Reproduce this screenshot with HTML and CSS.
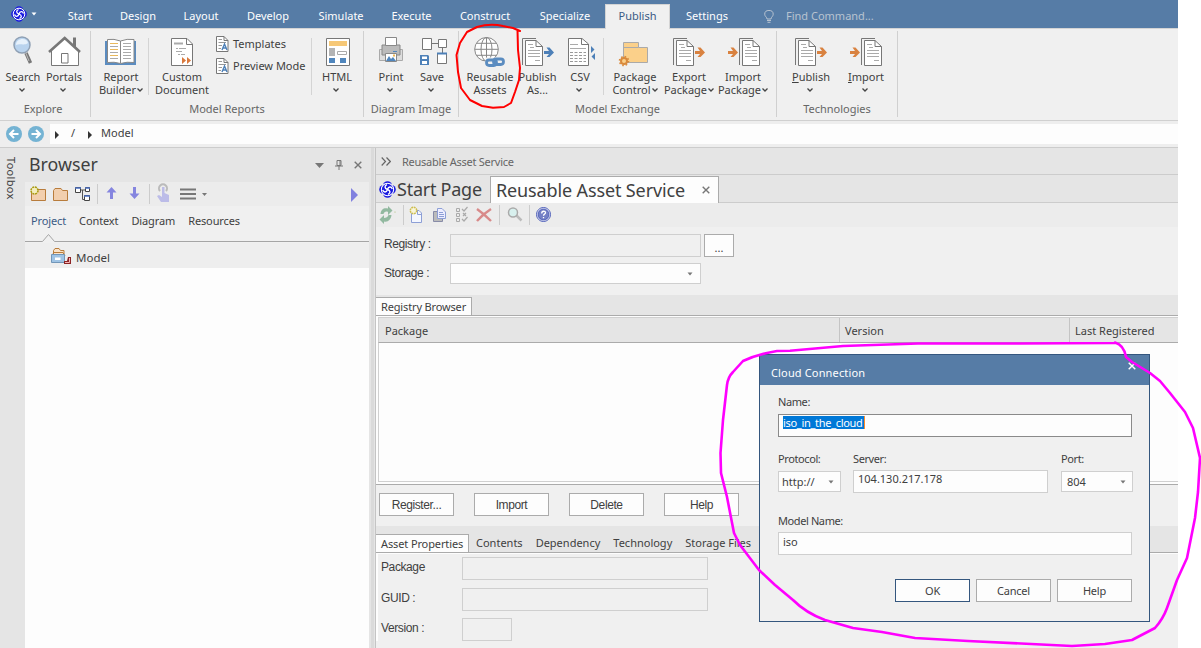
FILE: index.html
```html
<!DOCTYPE html>
<html lang="en">
<head>
<meta charset="utf-8">
<title>Reusable Asset Service</title>
<link rel="stylesheet" href="styles.css">
</head>
<body>
<svg class="defs" width="0" height="0">
  <symbol id="pages" viewBox="0 0 22 29" overflow="visible">
    <path d="M.5 27V.5H14" fill="none" stroke="#777"/>
    <path d="M3.500 2.500H14L20.500 8.500V27.500H3.500Z" fill="#fff" stroke="#777"/>
    <path d="M14 2.500V8.500H20.500" fill="none" stroke="#777"/>
    <path d="M6 6.500H11M8 9.500H12M6 12.500H18M6 15.500H18M6 18.500H18M13 22.500H18" stroke="#aaa"/>
  </symbol>
  <symbol id="arrow" viewBox="0 0 10 10" overflow="visible"><path d="M0 3.500H5L2.500 0H5.500L10 5L5.500 9.500H2.500L5 6.500H0Z" fill="currentColor"/></symbol>
  <symbol id="chev" viewBox="0 0 6 4" overflow="visible"><path d="M.5 .5L3 3L5.500 .5" fill="none" stroke="#444" stroke-width="1.3"/></symbol>
  <symbol id="tri" viewBox="0 0 6 4"><path d="M.5 .5H5.500L3 3.500Z" fill="currentColor"/></symbol>
  <symbol id="logo" viewBox="0 0 16 16">
    <g fill="#1a1ae0"><circle cx="8" cy="4.500" r="4.300"/><circle cx="11.500" cy="8" r="4.300"/><circle cx="8" cy="11.500" r="4.300"/><circle cx="4.500" cy="8" r="4.300"/></g>
    <circle cx="8" cy="8" r="5.800" fill="none" stroke="#fff"/>
    <g fill="none" stroke="#fff" stroke-width="1.300"><path d="M8 8C5 7 5 4.500 7.500 3.500M8 8C9 5 11.500 5 12.500 7.500M8 8C11 9 11 11.500 8.500 12.500M8 8C7 11 4.500 11 3.500 8.500"/></g>
  </symbol>
  <symbol id="tpl" viewBox="0 0 13 16">
    <path d="M.5 .5H8L12 4.500V15.500H.5Z" fill="#fff" stroke="#777"/><path d="M8 .5V4.500H12" fill="none" stroke="#777"/>
    <path d="M2.500 3.500H6M2.500 6.500H10M2.500 9.500H6M2.500 12.500H5" stroke="#999"/>
    <path d="M6 14L8.500 8L11 14M7 12H10" fill="none" stroke="#4d80b8" stroke-width="1.400"/>
  </symbol>
  <symbol id="x" viewBox="0 0 8 8"><path d="M.7 .7L7.300 7.300M7.300 .7L.7 7.300" stroke="currentColor" stroke-width="1.400"/></symbol>
</svg>

<div class="app">
  <nav class="menu">
    <div class="brand"><svg width="16" height="16"><use href="#logo"/></svg><svg class="white" width="6" height="4"><use href="#tri"/></svg></div>
    <span class="m w56">Start</span><span class="m w60">Design</span><span class="m w66">Layout</span><span class="m w68">Develop</span><span class="m w78">Simulate</span><span class="m w63">Execute</span><span class="m w84">Construct</span><span class="m w76">Specialize</span>
    <span class="m active">Publish</span><span class="m w74">Settings</span>
    <svg class="bulb" width="10" height="13" viewBox="0 0 10 13"><path d="M3 9C3 7 .7 6.500 .7 4.200A4.200 3.700 0 0 1 9.200 4.200C9.200 6.500 7 7 7 9ZM3 10.500H7M3.500 12.300H6.500" fill="none" stroke="#b8c3d0"/></svg>
    <span class="find">Find Command...</span>
  </nav>

  <section class="ribbon">
    <div class="group g1">
      <div class="row">
        <div class="btn w42"><svg class="ico" viewBox="0 0 32 32"><path d="M19 18L23.500 28" stroke="#777" stroke-width="3.500"/><path d="M18 16L22 26" stroke="#bbb"/><circle cx="15" cy="10" r="8" fill="#b9d3ee" stroke="#8fa0b4" stroke-width="1.500"/><path d="M9 10C9 3 20 2 21 8C17 11 13 8 9 10Z" fill="#e7f1fb"/></svg><span>Search</span><svg class="chev"><use href="#chev"/></svg></div>
        <div class="btn w40"><svg class="ico" viewBox="0 0 32 32"><path d="M26.500 14V2.500" stroke="#777" stroke-width="3"/><path d="M3.500 15V30.500H30.500V15L17 3Z" fill="#fff" stroke="#777"/><path d="M1 17L16.700 3L32 17" fill="none" stroke="#777" stroke-width="2.600"/><path d="M13.500 18.500H20V28H13.500Z" fill="#fff" stroke="#777"/></svg><span>Portals</span><svg class="chev"><use href="#chev"/></svg></div>
      </div>
      <div class="cap">Explore</div>
    </div>
    <div class="group g2">
      <div class="row">
        <div class="btn w54"><svg class="ico" viewBox="0 0 32 32"><path d="M0 6H31V30H0Z" fill="#5b8cc0"/><path d="M2.500 4.500Q9 3.500 15.500 6Q22 3.500 29 4.500V27.500Q22 26.500 15.500 28.500Q9 26.500 2.500 27.500Z" fill="#fff" stroke="#888"/><path d="M15.500 6V28" stroke="#888"/><path d="M5 8.500H13M5 14.500H13M5 20.500H13" stroke="#e9b95c"/><path d="M5 11.500H13M5 17.500H13M5 23.500H13M18 8.500H26M18 11.500H26M18 14.500H26M18 17.500H26M18 20.500H26M18 23.500H26" stroke="#aaa"/></svg><span>Report<br>Builder<svg class="ic"><use href="#chev"/></svg></span></div>
        <i class="sep"></i>
        <div class="btn w64 cd"><svg class="ico" viewBox="0 0 32 32"><path d="M5.500 3.500H21L26.500 9V30.500H5.500Z" fill="#fff" stroke="#777"/><path d="M20.500 3.500V9.500H26.500" fill="none" stroke="#777"/><path d="M8 8.500H17" stroke="#aaa" stroke-width="2"/><path d="M10 13.500H12M13 13.500H20M10 16.500H16M12 19.500H14M15 19.500H19" stroke="#aaa"/><path d="M16 22L20 25.500L16 29ZM21 22L25 25.500L21 29Z" fill="#d9793c"/></svg><span>Custom<br>Document</span></div>
        <div class="list"><div><svg width="13" height="16"><use href="#tpl"/></svg>Templates</div><div><svg width="13" height="16"><use href="#tpl"/></svg>Preview Mode</div></div>
        <i class="sep"></i>
        <div class="btn w50"><svg class="ico" viewBox="0 0 32 32"><path d="M5.500 3.500H28.500V30.500H5.500Z" fill="#fff" stroke="#777"/><path d="M8 6H26V11H8Z" fill="#f6c877"/><path d="M8 13H14V21H8Z" fill="#b4b4b4"/><path d="M16.500 16.500H25.500V19.500H16.500Z" fill="none" stroke="#aaa"/><path d="M8 23H14V28H8ZM19 23H25V28H19Z" fill="#5086bd"/></svg><span>HTML</span><svg class="chev"><use href="#chev"/></svg></div>
      </div>
      <div class="cap">Model Reports</div>
    </div>
    <div class="group g3">
      <div class="row">
        <div class="btn w42"><svg class="ico" viewBox="0 0 32 32"><path d="M4.500 14.500H27.500V25.500H4.500Z" fill="#ddd" stroke="#aaa"/><path d="M7 10H25V20H7Z" fill="#bbb" stroke="#888"/><path d="M10.500 2.500H21.500V10.500H10.500Z" fill="#fff" stroke="#888"/><path d="M10.500 18.500H21.500V26.500H10.500Z" fill="#fff" stroke="#888"/><path d="M11 26L14 21L16 24L18 22L21 26Z" fill="#5086bd"/><path d="M18 20.500H20" stroke="#f0b850" stroke-width="2"/><path d="M18 16.500H22" stroke="#5086bd"/></svg><span>Print</span><svg class="chev"><use href="#chev"/></svg></div>
        <div class="btn w40"><svg class="ico" viewBox="0 0 32 32"><path d="M15 8.500H22M26.500 13V18" stroke="#777"/><path d="M6.500 3.500H15.500V14.500H6.500ZM22.500 4.500H30.500V12.500H22.500ZM21.500 18.500H30.500V28.500H21.500Z" fill="#fff" stroke="#777"/><path d="M21 18.500H31" stroke="#4d80b8" stroke-width="2"/><path d="M4 20H12L13 21V30H4Z" fill="#4d80b8"/><path d="M6 21.500H11V24H6ZM6 26H11V29H6Z" fill="#fff"/></svg><span>Save</span><svg class="chev"><use href="#chev"/></svg></div>
      </div>
      <div class="cap">Diagram Image</div>
    </div>
    <div class="group g4">
      <div class="row">
        <div class="btn w56"><svg class="ico" viewBox="0 0 32 32"><g stroke="#888" fill="none"><circle cx="12.500" cy="14.300" r="11.800" fill="#fff"/><ellipse cx="12.500" cy="14.300" rx="5.500" ry="11.800"/><path d="M12.500 2.500V26M.7 14.300H24.300M2.500 8.300H22.500M2.500 20.300H22.500"/></g><path d="M11.500 22.500H31V32H11.500Z" fill="#f0f0f0"/><g fill="none" stroke="#5b8cc0" stroke-width="2.800"><rect x="12.500" y="25" width="10" height="5.500" rx="2.700"/><rect x="19.500" y="24" width="10" height="5.500" rx="2.700"/></g></svg><span>Reusable<br>Assets</span></div>
        <div class="btn w39"><svg class="ico blue" viewBox="0 0 32 32"><use href="#pages" x="0" y="3" width="22" height="29"/><use href="#arrow" x="22" y="12.500" width="10" height="10"/></svg><span>Publish<br>As...</span></div>
        <div class="btn w46"><svg class="ico" viewBox="0 0 32 32"><path d="M4.500 3.500H18L24.500 9V30.500H4.500Z" fill="#fff" stroke="#777"/><path d="M17.500 3.500V9.500H24.500" fill="none" stroke="#777"/><path d="M6 9.500H14M6 13.500H22" stroke="#aaa"/><path d="M6 17.500H22M6 20.500H22M6 23.500H22M6 26.500H22" stroke="#999" stroke-dasharray="3 1.500"/><path d="M27 11L30.500 14.500L27 18ZM31 18V25L27.500 21.500Z" fill="#4d80b8"/></svg><span>CSV</span><svg class="chev"><use href="#chev"/></svg></div>
        <i class="sep"></i>
        <div class="btn w62"><svg class="ico" viewBox="0 0 32 32"><path d="M4.500 27.500V7.500H19.500V12.500H28.500V27.500Z" fill="#fbd08a" stroke="#aaa"/><path d="M4.500 12.500H19.500" stroke="#aaa"/><circle cx="5" cy="26" r="3" fill="#fbd08a" stroke="#d98a3c" stroke-width="2"/><circle cx="5" cy="26" r="4.500" fill="none" stroke="#d98a3c" stroke-width="1.600" stroke-dasharray="1.600 1.930"/></svg><span>Package<br>Control<svg class="ic"><use href="#chev"/></svg></span></div>
        <div class="btn w46"><svg class="ico orange" viewBox="0 0 32 32"><use href="#pages" x="0" y="3" width="22" height="29"/><use href="#arrow" x="22" y="12.500" width="10" height="10"/></svg><span>Export<br>Package<svg class="ic"><use href="#chev"/></svg></span></div>
        <div class="btn w62"><svg class="ico orange" viewBox="0 0 32 32"><use href="#pages" x="12" y="3" width="22" height="29"/><use href="#arrow" x="1" y="12.500" width="10" height="10"/></svg><span>Import<br>Package<svg class="ic"><use href="#chev"/></svg></span></div>
      </div>
      <div class="cap">Model Exchange</div>
    </div>
    <div class="group g5">
      <div class="row">
        <div class="btn w60"><svg class="ico orange" viewBox="0 0 32 32"><use href="#pages" x="0" y="3" width="22" height="29"/><use href="#arrow" x="22" y="12.500" width="10" height="10"/></svg><span><u>P</u>ublish</span><svg class="chev"><use href="#chev"/></svg></div>
        <div class="btn w50"><svg class="ico orange" viewBox="0 0 32 32"><use href="#pages" x="11" y="3" width="22" height="29"/><use href="#arrow" x="0" y="12.500" width="10" height="10"/></svg><span><u>I</u>mport</span><svg class="chev"><use href="#chev"/></svg></div>
      </div>
      <div class="cap">Technologies</div>
    </div>
  </section>

  <div class="address">
    <svg width="16" height="16" viewBox="0 0 16 16"><circle cx="8" cy="8" r="8" fill="#74b3d3"/><path d="M12.500 8H4.500M8 4L4 8L8 12" fill="none" stroke="#fff" stroke-width="2"/></svg>
    <svg width="16" height="16" viewBox="0 0 16 16"><circle cx="8" cy="8" r="8" fill="#74b3d3"/><path d="M3.500 8H11.500M8 4L12 8L8 12" fill="none" stroke="#fff" stroke-width="2"/></svg>
    <div class="path"><svg width="4" height="8"><path d="M0 0V8L4 4Z" fill="#333"/></svg><span>/</span><svg width="4" height="8"><path d="M0 0V8L4 4Z" fill="#333"/></svg><span>Model</span></div>
  </div>

  <div class="work">
    <div class="toolbox">Toolbox</div>
    <aside class="browser">
      <header><h1>Browser</h1><svg width="9" height="5"><path d="M0 0H9L4.500 5Z" fill="#777"/></svg><svg width="8" height="10"><path d="M2 .5H6V5.500H2ZM0 6H8M4 6V10M5 1V5" fill="none" stroke="#777"/></svg><svg class="gray" width="8" height="8"><use href="#x"/></svg></header>
      <svg class="tools" width="344" height="24" viewBox="0 0 344 24">
        <path d="M6.500 7.500H20.500V18.500H6.500Z" fill="#f2cfae" stroke="#b87c3c"/><circle cx="9.500" cy="8.500" r="3.500" fill="#f4eec0" stroke="#a89a10" stroke-width="1.500" stroke-dasharray="2 .75"/>
        <path d="M28.500 18.500V8.500L30 6.500H36L37.500 8.500H42.500V18.500Z" fill="#f2cfae" stroke="#b87c3c"/>
        <path d="M55 8H60M57.500 8V17.500H60" fill="none" stroke="#555"/><path d="M50.500 5.500H55.500V10.500H50.500ZM60.500 5.500H64.500V9.500H60.500ZM59.500 13.500H64.500V18.500H59.500Z" fill="#fff" stroke="#444"/><path d="M50 6H56M60 6H65M59 14H65" stroke="#4a6ec0" stroke-width="1.500"/>
        <path d="M72.500 2V22M124.500 2V22" stroke="#ccc"/>
        <path d="M86.500 5L91.500 10.500H88V17H85V10.500H81.500Z" fill="#8585df"/><path d="M109.500 17L114.500 11.500H111V5H108V11.500H104.500Z" fill="#8585df"/>
        <path d="M135 9A4 4 0 1 1 141 9" fill="none" stroke="#bbb" stroke-width="2"/><path d="M137 5H139.500V11L144 13V20H136L132 14L134 13L137 15Z" fill="#bcbce8"/>
        <path d="M155 7.500H171M155 12H171M155 16.500H171" stroke="#777" stroke-width="2"/><path d="M177 11H182L179.500 14Z" fill="#777"/>
        <path d="M326 6V20L333 13Z" fill="#8181df"/>
      </svg>
      <div class="btabs"><span class="sel">Project</span><span>Context</span><span>Diagram</span><span>Resources</span></div>
      <svg class="caret" width="344" height="10"><path d="M0 8.500H17.500L23.500 1.500L29.500 8.500H344" fill="none" stroke="#a5a5a5"/></svg>
      <div class="node"><svg width="21" height="17" viewBox="0 0 21 17"><path d="M2.500 7V2.500L4 .5H8L9.500 2.500H13V7M.5 8L3 4.500H12L14 8" fill="#fbe3c8" stroke="#b87c3c"/><path d="M.5 6.500H13.500V14.500H.5Z" fill="#9fc3e4" stroke="#7296b8"/><path d="M4 9.500H9.500V12H4Z" fill="#fff"/><path d="M17 9H20V16H13V13H16Z" fill="#8d2424"/><path d="M18.500 10V14.500H14" stroke="#f6b5b5" fill="none"/></svg>Model</div>
      <div class="tree"></div>
    </aside>
    <div class="splitter"></div>
    <main class="main">
      <div class="crumb"><svg width="10" height="9"><path d="M.7 .5L4.500 4.500L.7 8.500M5.500 .5L9.300 4.500L5.500 8.500" fill="none" stroke="#666" stroke-width="1.200"/></svg>Reusable Asset Service</div>
      <div class="docs"><div class="doc start"><svg width="17" height="17"><use href="#logo"/></svg>Start Page</div><div class="doc on">Reusable Asset Service<svg class="gray" width="8" height="8"><use href="#x"/></svg></div></div>
      <svg class="dtools" width="802" height="24" viewBox="0 0 802 24">
        <path d="M4.500 11C5 6 8 4.500 12 5.500V3L16.500 7.500L12 12V9C10 8 8 9 7.500 11ZM15.500 12C15 16.500 12 19.500 8 18.500V21L3.500 16.500L8 12V15C10 15 12 14 12.500 12Z" fill="#92b9a0"/><circle cx="19" cy="9" r=".6" fill="#a8bb70"/>
        <path d="M27.500 2V22M123.500 2V22M153.500 2V22" stroke="#ccc"/>
        <path d="M35.500 7.500H43L45.500 10V19.500H35.500Z" fill="#f4f7ff" stroke="#8d9fd6"/><path d="M41.500 7.500V11.500H45.500" fill="none" stroke="#8d9fd6"/><circle cx="37.500" cy="7.500" r="3.200" fill="#f8f5d8" stroke="#cdbd50" stroke-width="1.500" stroke-dasharray="1.800 .7"/>
        <path d="M57.500 8.500H66.500V18.500H57.500Z" fill="#bbb" stroke="#888ca8"/><path d="M61.500 5.500H66L69.500 9V15.500H61.500Z" fill="#eef" stroke="#8d9fd6"/><path d="M63 9.500H67M63 11.500H68M63 13.500H68" stroke="#8d9fd6"/>
        <path d="M80.500 5.500H83.500V8.500H80.500ZM80.500 10.500H83.500V13.500H80.500ZM80.500 15.500H83.500V18.500H80.500Z" fill="none" stroke="#aaa"/><path d="M86 6L88 8L91.500 4M87 10L90 13M90 10L87 13M86 16L88 18L91.500 14" fill="none" stroke="#aaa" stroke-width="1.200"/>
        <path d="M101 6Q108 11 115 18M115 6Q107 11 101 18" fill="none" stroke="#d88a8a" stroke-width="2.400"/>
        <path d="M140 12L145.500 17.500" stroke="#bbb" stroke-width="2.500"/><circle cx="137" cy="9.500" r="4.500" fill="#d8f0ee" stroke="#aaa" stroke-width="1.500"/>
        <circle cx="167.500" cy="11.500" r="7" fill="#fff" stroke="#4a5bb8"/><circle cx="167.500" cy="11.500" r="5.500" fill="#7480c5" stroke="#4a5bb8"/><path d="M165.700 10.500C165.700 7.500 169.500 7.700 169.500 9.800C169.500 11 167.500 11.200 167.500 12.800M167.500 14V15.200" fill="none" stroke="#fff" stroke-width="1.300"/>
      </svg>
      <div class="form">
        <label>Registry :</label><div class="field dis"></div><button class="dots">...</button>
        <label class="low">Storage :</label><div class="field combo"><svg width="6" height="4"><use href="#tri"/></svg></div>
      </div>
      <div class="band b1"><span class="on">Registry Browser</span></div>
      <div class="grid"><div class="thead"><span class="c1">Package</span><span class="c2">Version</span><span class="c3">Last Registered</span></div><div class="tbody"></div></div>
      <div class="actions"><button>Register...</button><button>Import</button><button>Delete</button><button>Help</button></div>
      <div class="band b2"><span class="on">Asset Properties</span><span>Contents</span><span>Dependency</span><span>Technology</span><span>Storage Files</span></div>
      <div class="props"><label>Package</label><div class="field"></div><label>GUID :</label><div class="field"></div><label>Version :</label><div class="field short"></div></div>
    </main>
  </div>
</div>

<div class="dialog">
  <header>Cloud Connection<svg width="8" height="8"><use href="#x"/></svg></header>
  <div class="body">
    <label>Name:</label>
    <div class="in focus"><mark>iso_in_the_cloud</mark></div>
    <div class="cols">
      <div class="proto"><label>Protocol:</label><div class="in sel">http://<svg width="6" height="4"><use href="#tri"/></svg></div></div>
      <div class="server"><label>Server:</label><div class="in">104.130.217.178</div></div>
      <div class="port"><label>Port:</label><div class="in sel">804<svg width="6" height="4"><use href="#tri"/></svg></div></div>
    </div>
    <label>Model Name:</label>
    <div class="in last">iso</div>
    <div class="dbtns"><button class="ok">OK</button><button>Cancel</button><button>Help</button></div>
  </div>
</div>

<svg class="ink" width="1201" height="648" viewBox="0 0 1201 648">
  <path d="M520 31L513 28L503 26Q490 23 477 27L467 32L460 43L456.500 55L458 72L461 88L470 100L482 106L493 107.700L504 107L511 103L515 92L519 80L520 68L518 50L517.500 30" stroke="#f00" stroke-width="2"/>
  <path d="M1115 343L1020 343.500H918L843 346L790 350.700L777 351Q758 354 743 361L733 372Q728 377 727 385L723 420L720.500 453L721 473L727 497L734 533L740 545L759 570L775 585L793 600Q806 613 825 620L853 628L882 632L915 638L968 641L1072 646L1105 644L1132 640L1155 628Q1163 619 1167 608L1177 580L1187 558L1195 518L1198 492L1200 458L1193 428L1185 412L1170 393L1160 381L1150 373L1132 362L1126 357Q1124 345 1115 342.500" stroke="#f0f" stroke-width="2.600"/>
</svg>
</body>
</html>
```
FILE: styles.css
```css
* { box-sizing: border-box; }
body { margin: 0; width: 1201px; height: 648px; overflow: hidden; background: #fff; color: #404040; font: 11px/13px "Noto Sans", "Open Sans", sans-serif; position: relative; }
svg { flex: none; display: block; }
button { font: inherit; color: inherit; padding: 0; background: #fdfdfd; border: 1px solid #ababab; }
.defs { position: absolute; }
.app { width: 1178px; height: 648px; display: flex; flex-direction: column; background: #e5e5e5; }

/* menu bar */
.menu { height: 28px; flex: none; display: flex; background: #567ca6; color: #fff; padding-top: 4px; }
.brand { width: 52px; padding: 2px 0 0 11px; display: flex; gap: 4px; }
.brand .white { color: #fff; margin-top: 6px; }
.m { flex: none; text-align: center; line-height: 24px; }
.m.active { width: 65px; height: 25px; margin-left: 2px; background: #f0f0f0; color: #3a5a85; border: 1px solid #d4d4d4; border-bottom: 0; line-height: 22px; position: relative; }
.bulb { margin: 6px 0 0 20px; }
.find { margin-left: 12px; line-height: 24px; color: #b8c3d0; }
.w39 { width: 39px; } .w40 { width: 40px; } .w42 { width: 42px; } .w46 { width: 46px; }
.w50 { width: 50px; } .w54 { width: 54px; } .w56 { width: 56px; } .w60 { width: 60px; } .w62 { width: 62px; }
.w63 { width: 63px; } .w64 { width: 64px; } .w66 { width: 66px; } .w68 { width: 68px; } .w74 { width: 74px; }
.w76 { width: 76px; } .w78 { width: 78px; } .w84 { width: 84px; }

/* ribbon */
.ribbon { height: 93px; flex: none; display: flex; background: #f0f0f0; border-top: 1px solid #d4d4d4; border-bottom: 1px solid #d0d0d0; padding-top: 2px; }
.group { height: 86px; flex: none; border-right: 1px solid #d0d0d0; }
.row { height: 70px; display: flex; padding-top: 4px; }
.cap { text-align: center; line-height: 16px; color: #666; }
.g1 { width: 91px; } .g1 .row { padding-left: 2px; } .g1 .cap { padding-right: 4px; }
.g2 { width: 273px; } .g2 .row { padding-left: 3px; }
.g3 { width: 95px; } .g3 .row { padding-left: 6px; }
.g4 { width: 318px; } .g4 .row { padding-left: 3px; }
.g5 { width: 121px; } .g5 .row { padding-left: 4px; }
.btn { flex: none; display: flex; flex-direction: column; align-items: center; text-align: center; white-space: nowrap; }
.ico { width: 32px; height: 32px; margin-bottom: 3px; overflow: visible; }
.ico.blue { color: #4d80b8; } .ico.orange { color: #d98240; }
.chev { width: 6px; height: 4px; margin: 5px 2px 0 0; }
.ic { display: inline-block; width: 6px; height: 4px; margin-left: 1px; vertical-align: 2px; }
.cd { margin-left: 1px; }
.sep { width: 1px; height: 57px; margin-top: 3px; background: #d4d4d4; }
.list { width: 97px; padding: 1px 0 0 2px; white-space: nowrap; }
.list div { display: flex; gap: 4px; height: 22px; line-height: 16px; }

/* address bar */
.address { height: 27px; flex: none; display: flex; align-items: center; background: #eee; border-bottom: 1px solid #ccc; padding-left: 6px; gap: 6px; }
.path { flex: 1; height: 20px; background: #fdfdfd; display: flex; align-items: center; padding-left: 5px; line-height: 18px; }
.path svg { margin-top: 1px; }
.path span { height: 20px; margin: 0 13px 0 12px; }
.path span:last-child { margin-left: 9px; }

/* left panel */
.work { flex: 1; display: flex; min-height: 0; }
.toolbox { width: 25px; writing-mode: vertical-rl; padding: 9px 5px 0 0; line-height: 18px; letter-spacing: .3px; }
.browser { width: 344px; display: flex; flex-direction: column; }
.browser header { height: 34px; display: flex; align-items: center; gap: 11px; padding-right: 7px; }
h1 { font: 17.800px/32px "Noto Sans", sans-serif; height: 34px; margin: 0 auto 0 4px; }
.gray { color: #777; }
.tools { background: #ececec; }
.btabs { height: 27px; background: #f0f0f0; display: flex; gap: 13px; padding: 0 0 0 6px; line-height: 30px; letter-spacing: -.12px; }
.btabs .sel { color: #3a5a85; }
.caret { background: #f0f0f0; }
.node { height: 25px; background: #eee; display: flex; padding: 5px 0 0 26px; gap: 4px; line-height: 20px; font-size: 11.500px; }
.tree { flex: 1; background: #fdfdfd; }
.splitter { width: 7px; border-right: 1px solid #c4c4c4; background: linear-gradient(90deg, #e5e5e5 2px, #dadada 2px 5px, #e5e5e5 5px); }

/* document area */
.main { width: 802px; display: flex; flex-direction: column; background: #f0f0f0; }
.crumb { height: 27px; flex: none; display: flex; align-items: center; gap: 11px; padding-left: 5px; background: #e5e5e5; color: #666; border-bottom: 1px solid #ccc; letter-spacing: -.25px; }
.docs { height: 28px; flex: none; display: flex; padding-top: 1px; background: linear-gradient(#e5e5e5 27px, #ccc 27px); }
.doc { font-size: 18px; line-height: 27px; white-space: nowrap; }
.start { width: 114px; display: flex; align-items: center; gap: 1px; padding-left: 3px; letter-spacing: -.25px; }
.doc.on { width: 229px; background: #fdfdfd; border: 1px solid #ababab; border-bottom: 0; display: flex; align-items: center; justify-content: space-between; padding: 0 8px 0 5px; letter-spacing: -.13px; }
.dtools { background: #ececec; }
.form { height: 68px; flex: none; display: grid; grid-template-columns: 66px 254px 30px; grid-template-rows: 23px 21px; row-gap: 6px; padding: 7px 0 0 8px; align-items: center; }
.form label, .props label, .actions button { font: 12px "Liberation Sans", Arial, sans-serif; letter-spacing: -.4px; }
.form label { padding-bottom: 3px; }
.form .low { padding-bottom: 1px; }
.form .field { width: 251px; }
.form .dots { height: 23px; padding-top: 3px; }
.field { height: 100%; border: 1px solid #cfcfcf; }
.field.combo { background: #fdfdfd; display: flex; align-items: center; justify-content: flex-end; padding-right: 7px; color: #777; }
.band { flex: none; display: flex; background: #e5e5e5; border-bottom: 1px solid #ababab; white-space: nowrap; }
.band .on { background: #fdfdfd; border: 1px solid #ababab; border-width: 1px 1px 0 0; padding-left: 5px; }
.b1 { height: 21px; padding-top: 2px; }
.b1 .on { width: 96px; line-height: 18px; letter-spacing: -.15px; }
.grid { height: 169px; flex: none; background: #fdfdfd; padding: 1px 0 2px 2px; border-bottom: 1px solid #ababab; display: flex; flex-direction: column; }
.thead { height: 26px; display: flex; background: #e5e5e5; border: 1px solid #d0d0d0; border-width: 1px 0 1px 1px; border-bottom-color: #ababab; line-height: 25px; }
.thead .c1 { width: 460px; padding-left: 6px; }
.thead .c2 { width: 230px; }
.thead .c2, .thead .c3 { border-left: 1px solid #c4c4c4; padding-left: 5px; }
.tbody { flex: 1; border: 1px solid #d0d0d0; border-width: 0 0 1px 1px; }
.actions { height: 41px; flex: none; padding: 8px 0 0 3px; display: flex; gap: 20px; }
.actions button { width: 75px; height: 23px; }
.b2 { height: 27px; padding-top: 8px; line-height: 17px; gap: 13px; }
.b2 .on { width: 93px; margin-right: -6px; line-height: 18px; letter-spacing: -.12px; }
.props { display: grid; grid-template-columns: 81px 246px; grid-template-rows: 23px 23px 23px; row-gap: 7.500px; padding: 3px 0 0 3px; align-items: center; border-left: 2px solid #fdfdfd; border-top: 1px solid #fdfdfd; }
.props label { padding-bottom: 3px; }
.props .short { width: 50px; }

/* connection dialog, floating over the workspace */
.dialog { position: absolute; left: 759px; top: 354px; width: 391px; height: 268px; background: #f0f0f0; border: 1px solid #34567e; }
.dialog header { height: 30px; background: #567ca6; color: #fff; padding: 5px 13px 0 11px; line-height: 26px; display: flex; justify-content: space-between; letter-spacing: .15px; }
.dialog header svg { margin-top: 2px; }
.body { padding: 10px 17px 0 18px; }
.dialog label { display: block; height: 13px; letter-spacing: -.4px; }
.in { height: 23px; background: #fdfdfd; border: 1px solid #cfcfcf; padding: 1px 4px; line-height: 14px; margin-top: 6px; }
.in.focus { border-color: #8a8a8a; }
mark { background: #0078d7; color: #fff; letter-spacing: -.3px; border-right: 1px solid #ff8a28; display: block; width: 82px; height: 13px; line-height: 13px; }
.cols { display: flex; margin: 15px 0 21px; }
.cols > div { flex: none; }
.cols .in { margin-top: 5px; }
.proto { width: 63px; } .server { width: 195px; margin: 0 13px 0 12px; } .port { width: 72px; }
.cols .in.sel { height: 21px; margin-top: 6px; display: flex; align-items: center; justify-content: space-between; padding: 0 6px 0 3px; }
.port .in.sel { padding-left: 5px; }
.sel svg { color: #777; }
.in.last { margin-top: 5px; line-height: 16px; }
.dbtns { display: flex; justify-content: flex-end; gap: 6px; margin-top: 24px; letter-spacing: -.1px; }
.dbtns button { width: 75px; height: 23px; padding-bottom: 1px; letter-spacing: -.2px; }
.dbtns .ok { border-color: #34567e; }

/* pen marks */
.ink { position: absolute; left: 0; top: 0; fill: none; stroke-linejoin: round; stroke-linecap: round; pointer-events: none; }
```
